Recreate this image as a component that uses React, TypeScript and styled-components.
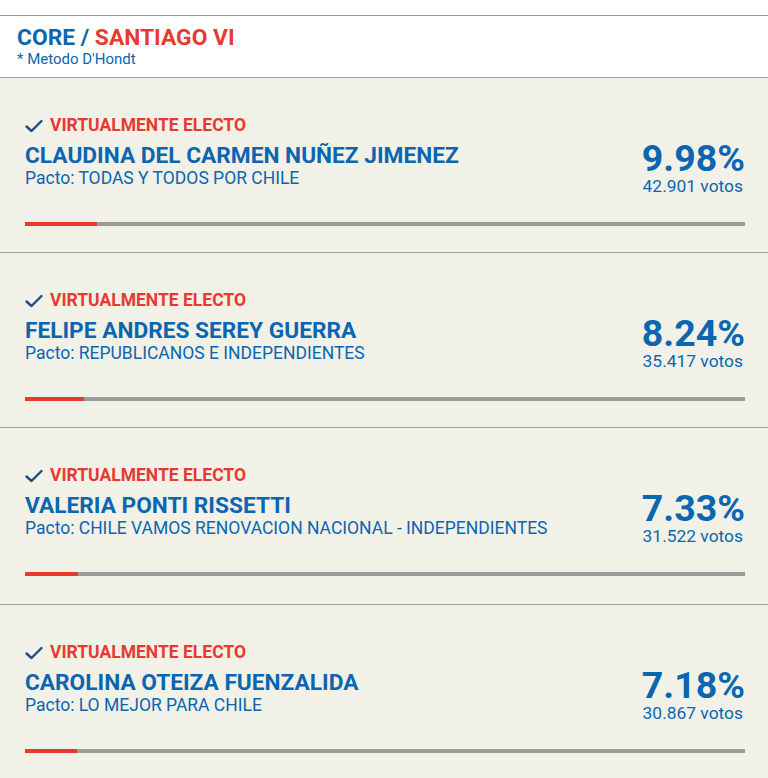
import styled, { createGlobalStyle } from "styled-components";

const GlobalStyle = createGlobalStyle`
  html, body {
    margin: 0;
    padding: 0;
    background: #ffffff;
  }
  body {
    font-family: Roboto, "Noto Sans", Arial, sans-serif;
  }
`;

type Candidate = {
  name: string;
  pacto: string;
  pct: number;
  votes: string;
};

const candidates: Candidate[] = [
  {
    name: "CLAUDINA DEL CARMEN NUÑEZ JIMENEZ",
    pacto: "TODAS Y TODOS POR CHILE",
    pct: 9.98,
    votes: "42.901",
  },
  {
    name: "FELIPE ANDRES SEREY GUERRA",
    pacto: "REPUBLICANOS E INDEPENDIENTES",
    pct: 8.24,
    votes: "35.417",
  },
  {
    name: "VALERIA PONTI RISSETTI",
    pacto: "CHILE VAMOS RENOVACION NACIONAL - INDEPENDIENTES",
    pct: 7.33,
    votes: "31.522",
  },
  {
    name: "CAROLINA OTEIZA FUENZALIDA",
    pacto: "LO MEJOR PARA CHILE",
    pct: 7.18,
    votes: "30.867",
  },
];

function CheckIcon() {
  return (
    <svg width="18" height="14" viewBox="0 0 18 14" fill="none">
      <path
        d="M1.5 7.5 L6.5 12 L16.5 2"
        stroke="#1f4f82"
        strokeWidth="2.4"
        strokeLinecap="round"
        strokeLinejoin="round"
      />
    </svg>
  );
}

export default function App() {
  return (
    <Page>
      <GlobalStyle />
      <Header>
        <Title>
          CORE / <Region>SANTIAGO VI</Region>
        </Title>
        <Method>* Metodo D'Hondt</Method>
      </Header>

      {candidates.map((c, i) => (
        <Card key={c.name} $tall={i === 2}>
          <Row>
            <Info>
              <Status>
                <CheckIcon />
                VIRTUALMENTE ELECTO
              </Status>
              <Name>{c.name}</Name>
              <Pacto>Pacto: {c.pacto}</Pacto>
            </Info>
            <Result>
              <Percent>{c.pct.toFixed(2)}%</Percent>
              <Votes>{c.votes} votos</Votes>
            </Result>
          </Row>
          <Bar>
            <BarFill style={{ width: `${c.pct}%` }} />
          </Bar>
        </Card>
      ))}
    </Page>
  );
}

const Page = styled.div`
  padding-top: 15px;
  width: 768px;
`;

const Header = styled.header`
  border-top: 1px solid #9a9a9a;
  background: #ffffff;
  padding: 8px 17px 0;
  height: 53px;
`;

const Title = styled.h1`
  margin: 0;
  font-size: 22.8px;
  line-height: 27px;
  font-weight: 700;
  color: #0a66b0;
`;

const Region = styled.span`
  color: #e63a30;
`;

const Method = styled.div`
  font-size: 15px;
  line-height: 17px;
  color: #0a66b0;
`;

const Card = styled.section<{ $tall?: boolean }>`
  border-top: 1px solid #9a9a9a;
  background: #f2f1e8;
  padding: ${(p) => (p.$tall ? "37px 23px 28px 25px" : "37px 23px 26px 25px")};
  height: ${(p) => (p.$tall ? "177px" : "175px")};
  box-sizing: border-box;
  display: flex;
  flex-direction: column;
`;

const Row = styled.div`
  display: flex;
  justify-content: space-between;
  align-items: flex-start;
`;

const Info = styled.div`
  display: flex;
  flex-direction: column;
`;

const Status = styled.div`
  display: flex;
  align-items: center;
  gap: 7px;
  font-size: 17.5px;
  line-height: 21px;
  font-weight: 700;
  color: #e63a30;
`;

const Name = styled.div`
  margin-top: 7px;
  font-size: 22.7px;
  line-height: 26px;
  font-weight: 700;
  color: #0a66b0;
`;

const Pacto = styled.div`
  font-size: 17.5px;
  line-height: 19px;
  color: #0a66b0;
`;

const Result = styled.div`
  margin-top: 24px;
  display: flex;
  flex-direction: column;
  align-items: flex-end;
  color: #0a66b0;
`;

const Percent = styled.div`
  font-size: 37.5px;
  line-height: 38px;
  font-weight: 700;
`;

const Votes = styled.div`
  font-size: 17.4px;
  line-height: 19px;
  padding-right: 2px;
`;

const Bar = styled.div`
  margin-top: auto;
  height: 4px;
  background: #9b9b9b;
  display: flex;
`;

const BarFill = styled.div`
  height: 100%;
  background: #e63a30;
`;
